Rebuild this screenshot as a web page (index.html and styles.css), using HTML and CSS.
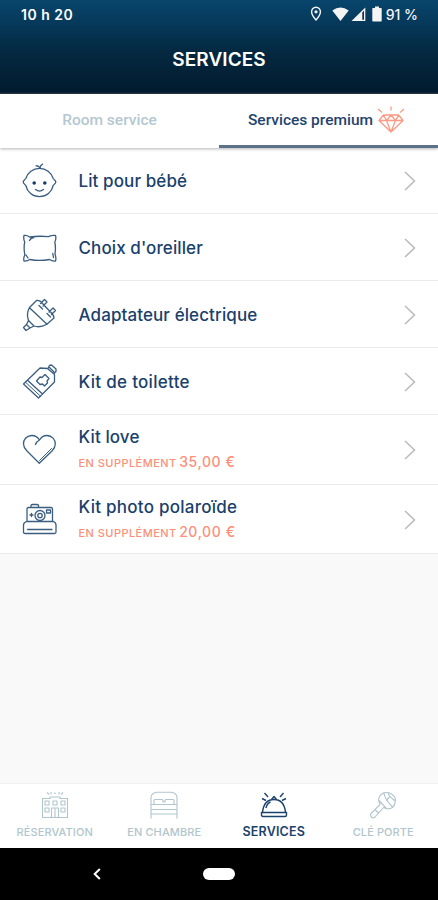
FILE: index.html
```html
<!DOCTYPE html>
<html lang="fr">
<head>
<meta charset="utf-8">
<title>Services</title>
<link rel="stylesheet" href="styles.css">
</head>
<body>
<div class="app">
  <header class="header">
    <div class="status">
      <span class="clock">10 h 20</span>
      <span class="indicators">
        <svg class="pin" width="12" height="16" viewBox="0 0 12 16"><path d="M6 1.200a4.400 4.400 0 0 1 4.400 4.500C10.400 9 6 14 6 14S1.600 9 1.600 5.700A4.400 4.400 0 0 1 6 1.200Z" fill="none" stroke="currentColor" stroke-width="1.400"/><circle cx="6" cy="5.800" r="1.600" fill="currentColor"/></svg>
        <svg class="wifi" width="17" height="15" viewBox="0 0 17 15"><path d="M.3 3.400Q8.500-2.500 16.700 3.400L8.500 14Z" fill="currentColor"/></svg>
        <svg class="signal" width="15" height="15" viewBox="0 0 15 15"><path d="M.5 14 14.300.5V14Z" fill="currentColor"/><path d="M11.300 5.500V12.800H13V3.800Z" fill="#06304d"/></svg>
        <svg class="battery" width="10" height="16" viewBox="0 0 10 16"><path d="M3 .5h4V2h2q.7 0 .7.700v12q0 .8-.7.800H1q-.7 0-.7-.8v-12Q.3 2 1 2h2Z" fill="currentColor"/></svg>
        <span class="level">91 %</span>
      </span>
    </div>
    <h1 class="title">SERVICES</h1>
  </header>

  <div class="tabs">
    <div class="tab">Room service</div>
    <div class="tab tab-active"><span>Services premium</span>
      <svg class="diamond" width="28" height="28" viewBox="0 0 28 28"><path d="M6.500 9h15l4.500 5.500L14 26 2 14.500ZM2 14.500h24M6.500 9l3 5.500L14 26l4.500-11.500 3-5.500M9.500 14.500 14 9l4.500 5.500M14 .5v4M1 3l4 3.500M27 3l-4 3.500"/></svg>
    </div>
  </div>

  <main class="list">
    <div class="row">
      <svg class="icon" viewBox="0 0 36 36"><path d="M3.800 15.500C5.500 9.500 11 5.300 17.500 5.300S29.500 9.500 31.200 15.500C32 16.700 34 17.500 33.800 19S32 21.500 31.200 22.500C29.800 29 24.500 33.700 17.500 33.700S5.200 29 3.800 22.500C3 21.500 1.400 20.500 1.200 19S3 16.700 3.800 15.500ZM18 5.300Q16.800 2.500 14 2.800M18 5.300Q18 2.500 20.500 1.200M13.500 26.500Q17.500 29.700 21.500 26.500"/><circle class="dot" cx="12.200" cy="20" r="1.800"/><circle class="dot" cx="22.800" cy="20" r="1.800"/></svg>
      <div class="text"><span class="name n1">Lit pour bébé</span></div>
      <svg class="chevron" viewBox="0 0 12 20"><path d="m1 1 9.500 9L1 19"/></svg>
    </div>
    <div class="row">
      <svg class="icon" viewBox="0 0 36 36"><path d="M2 5.500Q5 5 7.500 7Q17 5.700 26.500 6.700Q30 5 33.500 5.500Q34.500 9 32.800 12Q34 18 33 24Q34.500 28 33.500 31Q30 31.300 27.500 29.500Q17 31.200 8 29.500Q5 31.300 2 31Q1.200 28 2.800 25Q1.500 18 2.700 12Q1.200 9 2 5.500ZM12 7.500Q9 7.500 7.500 10.500M30.800 23.500l.7 4M4 25l2 3"/></svg>
      <div class="text"><span class="name n2">Choix d'oreiller</span></div>
      <svg class="chevron" viewBox="0 0 12 20"><path d="m1 1 9.500 9L1 19"/></svg>
    </div>
    <div class="row">
      <svg class="icon" viewBox="0 0 36 36"><path d="M14.500 3.500 7.500 10.500Q4 17 6.500 23.500L12 29Q18 31 24.500 27.500L32 21Q32 18 28.500 15L20.500 6.500Q18 3 14.500 3.500ZM7.500 10.800 25 27.200M6.500 23.500 4.500 27.500l3.500 3.500L12 29M4.500 27.500l-3 3 2.500 3L8 31M18.500 6.500l4-4 2.500 2.500-4 4M27 15l4-4 2.500 2.500-4 4M17 8.500 20.500 12M25 16.500l3.500 3.500"/></svg>
      <div class="text"><span class="name n3">Adaptateur électrique</span></div>
      <svg class="chevron" viewBox="0 0 12 20"><path d="m1 1 9.500 9L1 19"/></svg>
    </div>
    <div class="row">
      <svg class="icon" viewBox="0 0 36 36"><path d="M1.500 20 18 4 25.500 4.500 32.500 10.500V18L16.500 34ZM5.500 16.200 20.500 30M26 4.500l1.500-3 2-.5L34 5v2.500L32 9.500M27.500 3.500 32 8M14.500 17 18 13l2 .5 3-3 4 4-2 2.500.5 2-3 3-2-2-2.500.5Z"/><path class="fine" d="M3.500 18.200 18.300 32"/></svg>
      <div class="text"><span class="name n4">Kit de toilette</span></div>
      <svg class="chevron" viewBox="0 0 12 20"><path d="m1 1 9.500 9L1 19"/></svg>
    </div>
    <div class="row row-tall">
      <svg class="icon" viewBox="0 0 36 36"><path d="M17.500 8Q14.500 3.300 9.500 3.500C4.500 4 1.300 7.500 1.500 12Q1.500 15.500 5 19L17.300 31.300 30 19Q33.300 15.500 33.300 12C33.300 7.500 30 3.800 25 3.500Q20.500 3.300 17.500 8ZM17.500 8Q14.500 9.500 13.500 12.500"/><path class="fine" d="M17.500 28.500 29.500 16.500"/></svg>
      <div class="text"><span class="name n5">Kit love</span><span class="extra"><span class="label">EN SUPPLÉMENT</span><span class="price">35,00 €</span></span></div>
      <svg class="chevron" viewBox="0 0 12 20"><path d="m1 1 9.500 9L1 19"/></svg>
    </div>
    <div class="row row-last">
      <svg class="icon" viewBox="0 0 36 36"><path d="M5 19V7Q5 5.500 6.500 5.500H29Q30.500 5.500 30.500 7V19M4.500 19.500H31.500Q34 20.500 34 23V30Q34 31.500 32.500 31.500H3Q1.500 31.500 1.500 30V23Q1.500 20.500 4.500 19.500ZM5.500 27.500H30M9 5.500V3.500Q9 2.500 10.500 2.500H15Q16.500 2.500 16.500 3.500V5.500M8 13h3M9.500 11.500v3M24.500 8h4v3h-4Z"/><circle cx="18" cy="13.500" r="5"/><circle cx="18" cy="13.500" r="2.200"/></svg>
      <div class="text"><span class="name n6">Kit photo polaroïde</span><span class="extra"><span class="label">EN SUPPLÉMENT</span><span class="price">20,00 €</span></span></div>
      <svg class="chevron" viewBox="0 0 12 20"><path d="m1 1 9.500 9L1 19"/></svg>
    </div>
  </main>

  <nav class="nav">
    <div class="item">
      <svg class="nav-icon" viewBox="0 0 28 28"><path d="M1.500 26.500V7.500H9V6H19V7.500H26.500V26.500ZM4 10h4v4H4ZM12 10h4v4h-4ZM20 10h4v4h-4ZM4 17h4v4H4ZM20 17h4v4h-4ZM10.500 26V17h7v9M14 17v9M6 1.500l2 2M13 2.300h2M22 1.500l-2 2M10 1v2.500M18 1v2.500"/></svg>
      <span class="nav-label">RÉSERVATION</span>
    </div>
    <div class="item">
      <svg class="nav-icon" viewBox="0 0 28 28"><path d="M1 27.500V6Q2 1.500 7 1.200H21Q26 1.500 27 6V27.500M1 13.500H27M1 18.500H27M1 23H27M4 13V9.500Q4 8.500 5 8.500H12Q13 8.500 13 9.500V11H15V9.500Q15 8.500 16 8.500H23Q24 8.500 24 9.500V13"/></svg>
      <span class="nav-label">EN CHAMBRE</span>
    </div>
    <div class="item item-active">
      <svg class="nav-icon" viewBox="0 0 28 28"><path d="M2.500 21C3.500 13 7.500 8.500 14 8.500S24.500 13 25.500 21M1.500 21.500H26.500V24Q26.500 25.500 25 25.500H3Q1.500 25.500 1.500 24ZM11.500 8.500 14 5.500l2.500 3M6 17Q7 12.500 10.500 11M4.500 2 8 6M2 7.500l4 2M23.500 2 20 6M26 7.500l-4 2"/></svg>
      <span class="nav-label">SERVICES</span>
    </div>
    <div class="item">
      <svg class="nav-icon" viewBox="0 0 28 28"><path d="M9.500 9Q10 4 15 1.800Q22 .5 26 6.500Q27.500 12.500 23.500 16.500Q20.500 18.500 17 17.500L14.500 16.500 6 26Q4 27.500 2.500 26Q.8 24.500 2 22.500L11 13.500ZM9.500 9l8 8.500M15 2Q15.500 8 23.500 16M19 1.800Q19.500 5 26.300 10M20.500 6 17 9.500M6 18.500l3.500 3.500"/></svg>
      <span class="nav-label">CLÉ PORTE</span>
    </div>
  </nav>

  <footer class="system">
    <svg class="back" width="8" height="12" viewBox="0 0 8 12"><path d="M6.800 1 1.700 6l5.100 5"/></svg>
    <span class="home"></span>
  </footer>
</div>
</body>
</html>
```
FILE: styles.css
```css
* { box-sizing: border-box; }
body { margin: 0; font-family: Inter, "Liberation Sans", sans-serif; }
svg { display: block; flex: none; }
.app { width: 438px; height: 900px; display: flex; flex-direction: column; background: #f9f9f9; overflow: hidden; }

.header { height: 94px; flex: none; color: #fff; background: linear-gradient(#08456c 0%, #06395b 24%, #042941 55%, #021b2e 98%, #35434e 100%); }
.status { height: 28px; padding: 0 20px 0 21px; display: flex; align-items: center; justify-content: space-between; }
.clock { font-size: 14px; font-weight: 600; letter-spacing: .5px; }
.indicators { display: flex; align-items: center; color: #f4f4f4; }
.pin { margin-right: 10px; }
.signal { margin-left: 2px; }
.battery { margin-left: 6px; }
.level { margin-left: 4px; font-size: 14px; font-weight: 500; }
.title { margin: 0; height: 63px; line-height: 63px; text-align: center; font-size: 19px; font-weight: 600; letter-spacing: .1px; }

.tabs { height: 54px; flex: none; display: flex; background: #fff; box-shadow: 0 1px 3px rgba(0,0,0,.3); position: relative; font: 500 15.500px Roboto, sans-serif; }
.tab { width: 219px; padding-bottom: 2px; display: flex; align-items: center; justify-content: center; color: #b4c8d1; }
.tab-active { padding: 0 4px 0 0; color: #1f446d; border-bottom: 3px solid #5d7188; }
.diamond { margin-left: 4px; fill: none; stroke: #fb9a85; stroke-width: 1.300; stroke-linejoin: round; }

.list { flex: none; }
.row { height: 67px; padding: 1px 22px 0; display: flex; align-items: center; background: #fff; border-bottom: 1px solid #e9eaeb; }
.row:first-child { height: 66px; padding-top: 0; }
.row-tall { height: 70px; padding-top: 0; }
.row-last { height: 69px; }
.icon { width: 36px; height: 36px; fill: none; stroke: #3a5e80; stroke-width: 1.300; stroke-linejoin: round; stroke-linecap: round; }
.fine { stroke-width: 1; }
.dot { fill: #163e68; stroke: none; }
.text { flex: 1; margin-left: 20.500px; display: flex; flex-direction: column; align-items: flex-start; color: #1a416b; }
.name { font-size: 17px; line-height: 22px; font-weight: 500; white-space: nowrap; letter-spacing: .1px; }
.n4 { letter-spacing: .3px; }
.n6 { letter-spacing: .25px; }
.extra { margin-top: 3px; display: flex; align-items: baseline; gap: 2.500px; line-height: 22px; white-space: nowrap; color: #fb8f79; }
.label { font-size: 11px; font-weight: 500; letter-spacing: .45px; }
.price { font-size: 14px; font-weight: 500; letter-spacing: .6px; }
.chevron { width: 12px; height: 20px; fill: none; stroke: #b9b9b9; stroke-width: 1.500; }

.nav { height: 65px; flex: none; margin-top: auto; display: flex; background: #fff; border-top: 1px solid #f0f0f0; }
.item { flex: 1; padding-top: 7px; display: flex; flex-direction: column; align-items: center; color: #b0c5cd; }
.nav-icon { width: 28px; height: 28px; fill: none; stroke: currentColor; stroke-width: 1.100; stroke-linejoin: round; }
.nav-label { margin-top: 5px; font-size: 11px; line-height: 16px; font-weight: 500; letter-spacing: .1px; white-space: nowrap; }
.item-active { color: #1b426b; }
.item-active .nav-icon { stroke-width: 1.400; }
.item-active .nav-label { font-size: 12.500px; font-weight: 600; letter-spacing: .2px; }

.system { height: 52px; flex: none; display: grid; grid-template-columns: 1fr 32px 1fr; align-items: center; background: #000; }
.back { margin-left: 93px; fill: none; stroke: #fff; stroke-width: 2; }
.home { height: 12px; border-radius: 6px; background: #fff; }
```
